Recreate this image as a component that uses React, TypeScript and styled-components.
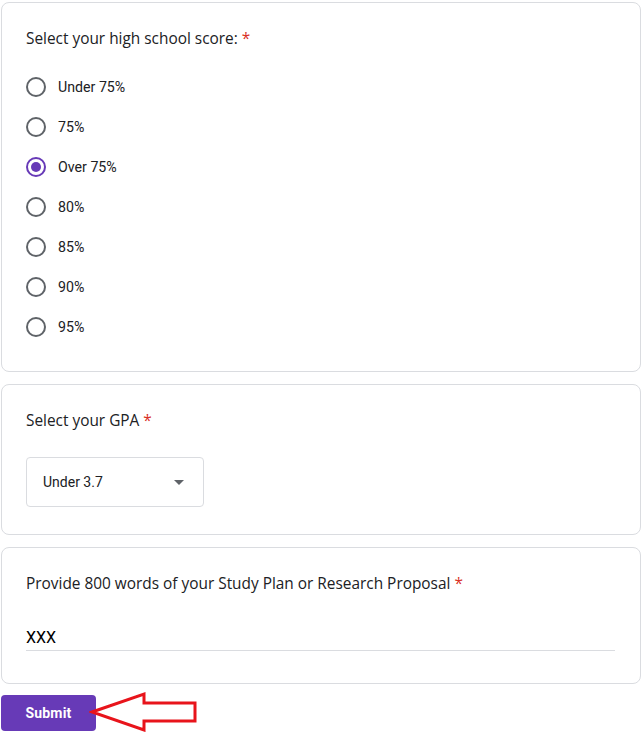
import React from 'react';
import styled, { createGlobalStyle } from 'styled-components';

const GlobalStyle = createGlobalStyle`
  html, body {
    margin: 0;
    padding: 0;
    background: #ffffff;
  }
  body {
    font-family: Roboto, "Liberation Sans", Arial, sans-serif;
    color: #202124;
  }
`;

const Page = styled.div`
  width: 644px;
  padding: 2px 3px 0 1px;
  box-sizing: border-box;
  display: flex;
  flex-direction: column;
`;

const Card = styled.div<{ $mt?: number; $pb: number }>`
  margin-top: ${(p) => p.$mt ?? 0}px;
  border: 1px solid #dadce0;
  border-radius: 8px;
  background: #fff;
  padding: 24px 24px ${(p) => p.$pb}px 24px;
  display: flex;
  flex-direction: column;
`;

const Title = styled.div`
  font-family: "Open Sans", Roboto, sans-serif;
  font-size: 15.4px;
  line-height: 24px;
  color: #202124;
`;

const Req = styled.span`
  color: #d93025;
  margin-left: 4px;
`;

const Options = styled.div`
  margin-top: 16px;
  display: flex;
  flex-direction: column;
`;

const Option = styled.label`
  height: 40px;
  display: flex;
  align-items: center;
  gap: 12px;
  font-size: 14.2px;
  color: #202124;
`;

const Radio = styled.span<{ $on?: boolean }>`
  width: 20px;
  height: 20px;
  box-sizing: border-box;
  border-radius: 50%;
  border: 2px solid ${(p) => (p.$on ? '#673ab7' : '#5f6368')};
  display: flex;
  align-items: center;
  justify-content: center;
  &::after {
    content: '';
    width: 10px;
    height: 10px;
    border-radius: 50%;
    background: ${(p) => (p.$on ? '#673ab7' : 'transparent')};
  }
`;

const Select = styled.div`
  margin-top: 24px;
  width: 178px;
  height: 50px;
  box-sizing: border-box;
  border: 1px solid #dadce0;
  border-radius: 4px;
  display: flex;
  align-items: center;
  justify-content: space-between;
  padding: 0 19px 0 16px;
  font-size: 14px;
  color: #202124;
`;

const Caret = styled.span`
  width: 0;
  height: 0;
  border-left: 5px solid transparent;
  border-right: 5px solid transparent;
  border-top: 5px solid #5f6368;
`;

const Answer = styled.div`
  margin-top: 30px;
  margin-right: 1px;
  border-bottom: 1px solid #dadce0;
  font-size: 16px;
  line-height: 24px;
  color: #000;
`;

const Footer = styled.div`
  position: relative;
  margin-top: 11px;
  height: 37px;
`;

const SubmitButton = styled.button`
  width: 95px;
  height: 36px;
  border: none;
  border-radius: 4px;
  background: #673ab7;
  color: #fff;
  font-family: Roboto, sans-serif;
  font-weight: 700;
  font-size: 14px;
  letter-spacing: 0.2px;
  cursor: pointer;
`;

const Arrow = styled.svg`
  position: absolute;
  left: 88px;
  top: -4px;
`;

const scores = ['Under 75%', '75%', 'Over 75%', '80%', '85%', '90%', '95%'];

export default function App() {
  return (
    <>
      <GlobalStyle />
      <Page>
        <Card $pb={24}>
          <Title>
            Select your high school score:<Req>*</Req>
          </Title>
          <Options>
            {scores.map((s) => (
              <Option key={s}>
                <Radio $on={s === 'Over 75%'} />
                {s}
              </Option>
            ))}
          </Options>
        </Card>
        <Card $mt={12} $pb={27}>
          <Title>
            Select your GPA<Req>*</Req>
          </Title>
          <Select>
            Under 3.7
            <Caret />
          </Select>
        </Card>
        <Card $mt={12} $pb={32}>
          <Title>
            Provide 800 words of your Study Plan or Research Proposal<Req>*</Req>
          </Title>
          <Answer>XXX</Answer>
        </Card>
        <Footer>
          <SubmitButton>Submit</SubmitButton>
          <Arrow width="112" height="42" viewBox="0 0 112 42">
            <polygon
              points="3,21 55,3 55,12 106,12 106,30 55,30 55,39"
              fill="#fff"
              stroke="#e8141b"
              strokeWidth="3"
              strokeLinejoin="miter"
            />
          </Arrow>
        </Footer>
      </Page>
    </>
  );
}
